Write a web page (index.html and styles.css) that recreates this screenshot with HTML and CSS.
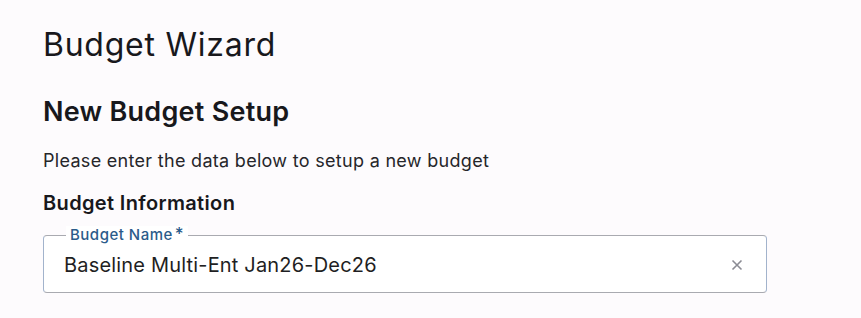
FILE: index.html
```html
<!DOCTYPE html>
<html lang="en">
<head>
    <meta charset="UTF-8">
    <meta name="viewport" content="width=device-width, initial-scale=1.0">
    <title>Budget Wizard</title>
    <link rel="stylesheet" href="styles.css">
</head>
<body>
    <div class="wizard">
        <h1 class="page-title">Budget Wizard</h1>
        <h2 class="step-title">New Budget Setup</h2>
        <p class="step-intro">Please enter the data below to setup a new budget</p>
        <h3 class="section-title">Budget Information</h3>

        <div class="field">
            <label class="field-label" for="budgetName">Budget Name<span class="required">*</span></label>
            <input type="text" id="budgetName" class="field-input" value="Baseline Multi-Ent Jan26-Dec26">
            <button type="button" class="clear-btn" aria-label="Clear">
                <svg viewBox="0 0 12 12" xmlns="http://www.w3.org/2000/svg">
                    <path d="M1.5 1.5 L10.5 10.5 M10.5 1.5 L1.5 10.5"/>
                </svg>
            </button>
        </div>
    </div>
</body>
</html>
```

FILE: styles.css
```css
* {
    margin: 0;
    padding: 0;
    box-sizing: border-box;
    font-family: 'Inter', 'Liberation Sans', sans-serif;
}

body {
    background: #fdfbfd;
    color: #18181c;
}

.wizard {
    padding: 25px 94px 0 43px;
}

.page-title {
    font-size: 32px;
    font-weight: 400;
    line-height: 40px;
    letter-spacing: 0.75px;
    margin-bottom: 30px;
}

.step-title {
    font-size: 27px;
    font-weight: 600;
    line-height: 34px;
    letter-spacing: 0.25px;
    margin-bottom: 20px;
}

.step-intro {
    font-size: 18px;
    line-height: 24px;
    letter-spacing: 0.3px;
    color: #26262a;
    margin-bottom: 17px;
}

.section-title {
    font-size: 20px;
    font-weight: 600;
    line-height: 26px;
    letter-spacing: 0.35px;
}

.field {
    position: relative;
    display: flex;
    align-items: center;
    margin-top: 19px;
    height: 58px;
    padding: 2px 19px 0 20px;
    background: #fff;
    border: 1px solid #a9aab0;
    border-left-color: #a2b3cc;
    border-right-color: #a2b3cc;
    border-radius: 4px;
}

.field-label {
    position: absolute;
    top: -10px;
    left: 22px;
    padding: 0 4px;
    background: #fff;
    font-size: 15px;
    font-weight: 500;
    line-height: 16px;
    letter-spacing: 0.5px;
    color: #2b5b8a;
}

.required {
    font-size: 17px;
    margin-left: 2px;
}

.field-input {
    flex: 1;
    border: none;
    outline: none;
    background: transparent;
    font-size: 20px;
    line-height: 26px;
    letter-spacing: 0.18px;
    color: #1f1f23;
}

.clear-btn {
    border: none;
    background: none;
    width: 20px;
    height: 20px;
    display: flex;
    align-items: center;
    justify-content: center;
    cursor: pointer;
}

.clear-btn svg {
    width: 12px;
    height: 12px;
    stroke: #8b8c94;
    stroke-width: 1.6;
    fill: none;
}
```
